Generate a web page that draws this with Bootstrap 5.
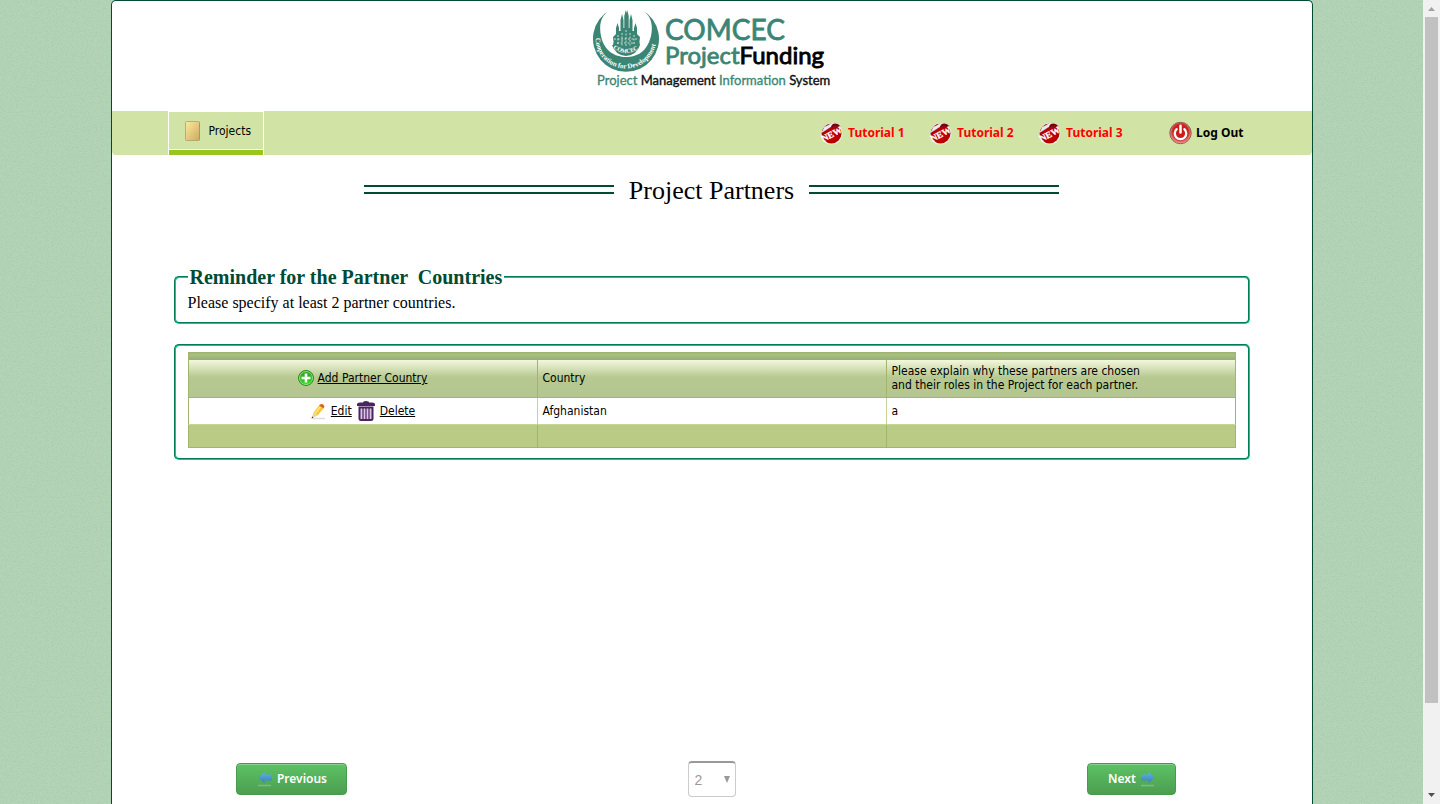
<!DOCTYPE html>
<html lang="en">
<head>
<meta charset="utf-8">
<meta name="viewport" content="width=device-width, initial-scale=1">
<title>COMCEC Project Funding - Project Partners</title>
<link href="https://cdn.jsdelivr.net/npm/bootstrap@5.3.0/dist/css/bootstrap.min.css" rel="stylesheet">
<style>
  :root { --pine: #004b32; --lime: #d1e4a6; --ui: "Noto Sans", "Open Sans", sans-serif; --ui-narrow: "DejaVu Sans Condensed", "DejaVu Sans", sans-serif; }
  body {
    font: 12px/14px var(--ui-narrow); color: #000; min-height: 100vh;
    background: #b4d4b6 url("data:image/svg+xml,%3Csvg xmlns='http://www.w3.org/2000/svg' width='200' height='200'%3E%3Cfilter id='n' x='0' y='0' width='100%25' height='100%25'%3E%3CfeTurbulence type='fractalNoise' baseFrequency='.8' numOctaves='2' stitchTiles='stitch'/%3E%3CfeColorMatrix values='0 0 0 0 .3 0 0 0 0 .48 0 0 0 0 .38 4 0 0 0 -1.8'/%3E%3C/filter%3E%3Crect width='200' height='200' filter='url(%23n)' opacity='.28'/%3E%3C/svg%3E");
  }
  a { color: #000; }
  .sheet { width: 1202px; max-width: 100%; border: 1px solid var(--pine); border-bottom: 0; border-radius: 5px 5px 0 0; background: #fff; }
  .brand-row { height: 110px; padding-top: 7px; }
  .menu { background: var(--lime); height: 44px; border-radius: 0 0 4px 4px; padding: 0 68px 0 56px; }
  .menu a { text-decoration: none; }
  .tab-on { border: 1px solid #fff; border-bottom: 0; padding: 0 12px 5px 16px; gap: 8px; box-shadow: inset 0 -5px #98c61e, inset 0 -6px #fff; }
  .tut { width: 109px; gap: 5px; color: #f00; }
  .tut, .out { font: 700 12px/14px var(--ui); }
  .out { gap: 4px; margin-left: 22px; }
  .heading { gap: 15px; padding-top: 20px; }
  .heading h1 { font: 26px/32px "Liberation Serif", serif; margin: 0; }
  .rails { flex: 0 1 250px; height: 9px; margin-bottom: 4px; border: solid var(--pine); border-width: 2px 0; }
  .content { padding: 0 62px; }
  .panel { border: 2px groove #00d090; border-radius: 5px; margin: 0; }
  .panel legend { float: none; width: auto; margin: 0; padding: 0 2px; font: 700 20px/22px "Liberation Serif", serif; color: var(--pine); white-space: pre; }
  .panel p { font: 16px/20px "Liberation Serif", serif; margin: 0; }
  .note { padding: 5px 12px 9px; margin-top: 59px; }
  .list { padding: 6px 12px 10px; margin-top: 20px; }
  .gridtable { width: 100%; table-layout: fixed; border-collapse: collapse; border: 1px solid #a2b46d; }
  .gridtable td, .gridtable th { font-weight: 400; padding: 0 5px; border-left: 1px solid #a2b46d; }
  .gridtable .strip th { height: 7px; background: linear-gradient(#afc386, #93ad70); border: 0; padding: 0; }
  .gridtable .names th { height: 38px; border-bottom: 1px solid #a2b46d; }
  .gridtable .names { background: linear-gradient(#f3f8de, #b7c991 45%, #b3c68f); }
  .gridtable tbody td { height: 27px; border-bottom: 1px solid #c6d69b; border-left-color: #c6d69b; }
  .gridtable tbody td:first-child { border-left-color: #a2b46d; }
  .gridtable tfoot td { height: 23px; background: #bacb85; }
  .pager { padding-bottom: 7px; }
  .side { width: 30%; }
  .go { height: 32px; padding: 0 19px 0 20px; gap: 4px; border: 1px solid #4a9a4e; border-radius: 4px; color: #fff; font: 600 12px/14px var(--ui); background: linear-gradient(#5dc264, #4c9e50); box-shadow: inset 0 1px #86d28a; }
  .pick { width: 48px; height: 36px; appearance: none; border: 1px solid #ccc; border-top: 2px solid #999; border-radius: 4px; padding: 0 6px; color: #999; font: 14px/18px "Liberation Sans", sans-serif;
    background: #fff url("data:image/svg+xml,%3Csvg xmlns='http://www.w3.org/2000/svg' width='6' height='7'%3E%3Cpath d='M0 0h6L3 7z' fill='%23999'/%3E%3C/svg%3E") no-repeat right 5px center; }
  .scroller { width: 17px; height: 100vh; background: #f1f1f1; top: 0; }
  .thumb { width: 13px; height: 686px; background: #c1c1c1; }
</style>
</head>
<body class="d-flex">
<svg width="0" height="0" class="position-absolute" aria-hidden="true">
  <defs>
    <radialGradient id="red" cx=".5" cy=".6" r=".6"><stop offset="0" stop-color="#d90000"/><stop offset="1" stop-color="#9d0000"/></radialGradient>
    <radialGradient id="glow" cx=".5" cy=".45" r=".6"><stop offset="0" stop-color="#c81414"/><stop offset=".6" stop-color="#cc2420"/><stop offset=".8" stop-color="#e88078"/><stop offset="1" stop-color="#ffd9d2"/></radialGradient>
    <linearGradient id="folder" x1="0" y1="0" x2="1" y2="1"><stop offset="0" stop-color="#fbeb9f"/><stop offset="1" stop-color="#cfa95f"/></linearGradient>
    <radialGradient id="plus" cx=".5" cy=".9" r=".9"><stop offset="0" stop-color="#35e01c"/><stop offset="1" stop-color="#2f9c26"/></radialGradient>
    <linearGradient id="blue" x1="0" y1="0" x2="0" y2="1"><stop offset="0" stop-color="#62b4e4"/><stop offset="1" stop-color="#3580b8"/></linearGradient>
    <symbol id="new" viewBox="0 0 24 24">
      <circle cx="12" cy="12.500" r="11.300" fill="#f1efe8"/>
      <circle cx="12" cy="12.500" r="10.400" fill="url(#red)"/>
      <path d="M0 13V0H14L12 1C8 1 5 4 3 7z" fill="#d1e4a6"/>
      <path d="M.8 12C2 10.500 3.500 8.500 4.500 5.500 8 5 11 2 13 1 17 .8 20 2.500 21.500 5 17 3.500 12 5 9 7 6 9 3 11 .8 12z" fill="#e9edf1" stroke="#c4c4c4" stroke-width=".4"/>
      <path d="M12.500 3.500C15 1.200 19 2 21.500 5.500 19 5 15 5 11 6.500z" fill="#7a0505"/>
      <text x="12" y="16.500" text-anchor="middle" transform="rotate(-28 12 13)" font-family="Liberation Serif, serif" font-weight="700" font-size="9.500" fill="#fff" stroke="#fff" stroke-width=".3">NEW</text>
    </symbol>
  </defs>
</svg>
<div class="flex-grow-1 d-flex justify-content-center min-vh-100">
  <div class="sheet d-flex flex-column">
    <header class="brand-row text-center">
      <svg width="240" height="84" viewBox="592 8 240 84" role="img" aria-label="COMCEC Project Funding">
        <path d="M610 10A33 33 0 1 0 642 10C652 16 653 26 651 36 647 52 637 57 626 57S604 51 601 36C599 26 600 16 610 10z" fill="#3b8574"/>
        <g fill="#3b8574">
          <path d="M612 45q3 10 14 11 11-1 14-11-1-3 0-8l-3-3v-6l-1.500-5-1.500 5v3h-1.500v-11l-1.500-6-1.500 6v8h-.8v-12l-1.500-6-.7 3-.7-3-1.500 6v12h-.8v-8l-1.500-6-1.500 6v11h-1.500v-3l-1.500-5-1.500 5v6l-3 3q1 5 0 8z"/>
        </g>
        <path d="M614 39h24M617 43h18M618 35v10M622 33v13M626 30v16M630 33v13M634 35v10" stroke="#fff" stroke-width=".7" stroke-dasharray="2 1.500"/>
        <path id="arcA" d="M613 48Q626 58 640 48" fill="none"/>
        <path id="arcB" d="M595.500 38A30.500 30.500 0 0 0 656.500 38" fill="none"/>
        <text font-family="Liberation Serif, serif" font-weight="700" font-size="6" fill="#fff"><textPath href="#arcA">COMCEC</textPath></text>
        <text font-family="Liberation Serif, serif" font-weight="700" font-size="7" fill="#fff"><textPath href="#arcB">Cooperation for Development</textPath></text>
        <g font-family="Lato, sans-serif">
          <text x="665" y="40" font-size="28" fill="#3b8574" stroke="#3b8574" stroke-width=".8">COMCEC</text>
          <text x="665" y="64" font-size="24" fill="#3b8574" stroke="#3b8574" stroke-width=".8">Project<tspan fill="#000" stroke="#000" stroke-width=".9">Funding</tspan></text>
          <text x="597" y="85" font-size="13" fill="#3b8574" stroke="#3b8574" stroke-width=".3">Project <tspan fill="#111" stroke="#111" stroke-width=".4">Management</tspan> Information <tspan fill="#111" stroke="#111" stroke-width=".4">System</tspan></text>
        </g>
      </svg>
    </header>
    <nav class="menu d-flex align-items-stretch">
      <a href="#" class="tab-on d-flex align-items-center">
        <svg width="16" height="20" viewBox="0 0 16 20"><path d="M13 1h2v18h-2z" fill="#8a7a5c"/><path d="M14 3h1v3h-1z" fill="#b33"/><path d="M14 10h1v3h-1z" fill="#3a8b4a"/><rect x=".5" y=".5" width="14" height="19" rx="1" fill="url(#folder)" stroke="#a89a62" stroke-opacity=".7"/></svg>
        Projects</a>
      <a href="#" class="tut d-flex align-items-center ms-auto"><svg width="23" height="24"><use href="#new"/></svg>Tutorial 1</a>
      <a href="#" class="tut d-flex align-items-center"><svg width="23" height="24"><use href="#new"/></svg>Tutorial 2</a>
      <a href="#" class="tut d-flex align-items-center"><svg width="23" height="24"><use href="#new"/></svg>Tutorial 3</a>
      <a href="#" class="out d-flex align-items-center">
        <svg width="23" height="24" viewBox="0 0 24 24"><circle cx="12" cy="12" r="11.200" fill="url(#glow)" stroke="#8d5a56"/><path d="M8 8a6 6 0 1 0 8 0" fill="none" stroke="#fff" stroke-width="2.400" stroke-linecap="round"/><path d="M12 4.500v7" stroke="#fff" stroke-width="2.600" stroke-linecap="round"/></svg>
        Log Out</a>
    </nav>
    <main class="content">
      <div class="heading d-flex justify-content-center align-items-center">
        <div class="rails"></div><h1>Project Partners</h1><div class="rails"></div>
      </div>
      <fieldset class="panel note">
        <legend>Reminder for the Partner  Countries</legend>
        <p>Please specify at least 2 partner countries.</p>
      </fieldset>
      <section class="panel list">
        <table class="gridtable">
          <thead>
            <tr class="strip"><th colspan="3"></th></tr>
            <tr class="names">
              <th><a href="#" class="d-flex justify-content-center align-items-center gap-1"><svg width="16" height="16" viewBox="0 0 16 16"><circle cx="8" cy="8" r="7.500" fill="url(#plus)" stroke="#2b8a22"/><circle cx="8" cy="8" r="6.500" fill="none" stroke="#a5eb97" stroke-width=".8"/><path d="M8 3.500v9M3.500 8h9" stroke="#fff" stroke-width="2.600"/></svg>Add Partner Country</a></th>
              <th>Country</th>
              <th>Please explain why these partners are chosen<br>and their roles in the Project for each partner.</th>
            </tr>
          </thead>
          <tbody>
            <tr>
              <td><div class="d-flex justify-content-center align-items-center gap-1">
                <svg width="17" height="17" viewBox="0 0 17 17"><path d="M2 15.500h13" stroke="#ddd" stroke-width="1.500"/><path d="M1.500 15.500l2-6 4 3z" fill="#f0d3a4"/><path d="M1.500 15.500l.7-2 1.300 1z" fill="#333"/><path d="M3.500 9.500L9 2.500l4.500 3-6 7z" fill="#f8c92e"/><path d="M5 10.500L10.500 3.500" stroke="#ffe680" stroke-width="1.500"/><path d="M9 2.500l1-1q3-1.500 4.500 2l-1 2z" fill="#d9611e"/></svg>
                <a href="#">Edit</a>
                <svg width="20" height="20" viewBox="0 0 20 20"><path d="M1 3.500q0-2 3-2h3q0-1.500 3-1.500t3 1.500h3q3 0 3 2V5H1z" fill="#4b2263"/><path d="M3.500 6.500h13V18q0 1-1.500 1H5q-1.500 0-1.500-1z" fill="#d7c8de" stroke="#4b2263" stroke-width="2"/><path d="M7 7v11M10 7v11M13 7v11" stroke="#4b2263" stroke-width="1.200"/></svg>
                <a href="#">Delete</a>
              </div></td>
              <td>Afghanistan</td>
              <td>a</td>
            </tr>
          </tbody>
          <tfoot><tr><td></td><td></td><td></td></tr></tfoot>
        </table>
      </section>
    </main>
    <footer class="pager d-flex align-items-center mt-auto">
      <div class="side d-flex justify-content-center">
        <button type="button" class="go d-flex align-items-center"><svg width="16" height="16" viewBox="0 0 16 16"><path d="M1 6.500L7.500 1v2.500H15v6H7.500V12z" fill="url(#blue)"/><path d="M1 14.500h13" stroke="#84b684" stroke-width="1.500"/></svg>Previous</button>
      </div>
      <div class="flex-grow-1 d-flex justify-content-center">
        <select class="pick" aria-label="Page"><option>1</option><option selected>2</option><option>3</option></select>
      </div>
      <div class="side d-flex justify-content-center">
        <button type="button" class="go d-flex align-items-center">Next<svg width="16" height="16" viewBox="0 0 16 16"><path d="M15 6.500L8.500 1v2.500H1v6h7.500V12z" fill="url(#blue)"/><path d="M1 14.500h13" stroke="#84b684" stroke-width="1.500"/></svg></button>
      </div>
    </footer>
  </div>
</div>
<div class="scroller position-sticky d-flex flex-column align-items-center flex-shrink-0" aria-hidden="true">
  <svg width="17" height="17"><path d="M5 11h7L8.500 7z" fill="#a3a3a3"/></svg>
  <div class="thumb"></div>
  <svg class="mt-auto" width="17" height="17"><path d="M5 6h7L8.500 10z" fill="#505050"/></svg>
</div>
<script src="https://cdn.jsdelivr.net/npm/bootstrap@5.3.0/dist/js/bootstrap.bundle.min.js"></script>
</body>
</html>
